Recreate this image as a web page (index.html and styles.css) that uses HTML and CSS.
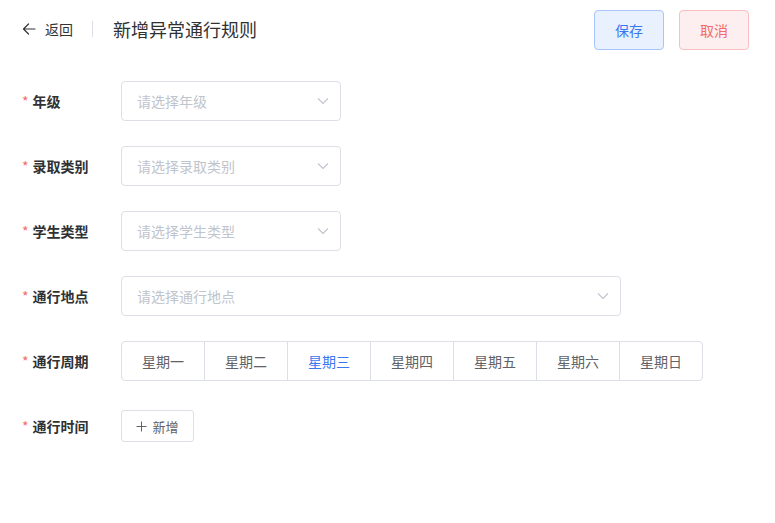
FILE: index.html
```html
<!DOCTYPE html>
<html lang="zh">
<head>
<meta charset="utf-8">
<link rel="stylesheet" href="styles.css">
</head>
<body>
<div class="page">
  <header class="header">
    <div class="header-left">
      <a class="back">
        <svg class="back-icon" width="14" height="14" viewBox="0 0 14 14"><path d="M13 7H1.5M6.5 2L1.5 7l5 5" fill="none" stroke="#333" stroke-width="1.2" stroke-linecap="round" stroke-linejoin="round"/></svg>
        <span>返回</span>
      </a>
      <span class="divider"></span>
      <h1 class="title">新增异常通行规则</h1>
    </div>
    <div class="header-actions">
      <button class="btn btn-save">保存</button>
      <button class="btn btn-cancel">取消</button>
    </div>
  </header>

  <form class="form">
    <div class="row">
      <label class="label"><span class="req">*</span>年级</label>
      <div class="select"><span class="ph">请选择年级</span><svg class="chev" width="12" height="8" viewBox="0 0 12 8"><path d="M1 1.5l5 5 5-5" fill="none" stroke="#c0c4cc" stroke-width="1.1"/></svg></div>
    </div>
    <div class="row">
      <label class="label"><span class="req">*</span>录取类别</label>
      <div class="select"><span class="ph">请选择录取类别</span><svg class="chev" width="12" height="8" viewBox="0 0 12 8"><path d="M1 1.5l5 5 5-5" fill="none" stroke="#c0c4cc" stroke-width="1.1"/></svg></div>
    </div>
    <div class="row">
      <label class="label"><span class="req">*</span>学生类型</label>
      <div class="select"><span class="ph">请选择学生类型</span><svg class="chev" width="12" height="8" viewBox="0 0 12 8"><path d="M1 1.5l5 5 5-5" fill="none" stroke="#c0c4cc" stroke-width="1.1"/></svg></div>
    </div>
    <div class="row">
      <label class="label"><span class="req">*</span>通行地点</label>
      <div class="select select-wide"><span class="ph">请选择通行地点</span><svg class="chev" width="12" height="8" viewBox="0 0 12 8"><path d="M1 1.5l5 5 5-5" fill="none" stroke="#c0c4cc" stroke-width="1.1"/></svg></div>
    </div>
    <div class="row">
      <label class="label"><span class="req">*</span>通行周期</label>
      <div class="week">
        <span class="day">星期一</span>
        <span class="day">星期二</span>
        <span class="day active">星期三</span>
        <span class="day">星期四</span>
        <span class="day">星期五</span>
        <span class="day">星期六</span>
        <span class="day">星期日</span>
      </div>
    </div>
    <div class="row">
      <label class="label"><span class="req">*</span>通行时间</label>
      <button type="button" class="btn-add"><svg class="plus" width="11" height="11" viewBox="0 0 11 11"><path d="M5.5 0.5v10M0.5 5.5h10" fill="none" stroke="#606266" stroke-width="1"/></svg>新增</button>
    </div>
  </form>
</div>
</body>
</html>
```

FILE: styles.css
```css
* { box-sizing: border-box; }
html, body { margin: 0; padding: 0; background: #fff; }
body {
  font-family: "Noto Sans CJK SC", "Noto Sans", sans-serif;
  color: #303133;
  width: 775px;
  height: 523px;
  overflow: hidden;
}
.page { padding: 10px 26px 0 22px; }
.header {
  display: flex;
  justify-content: space-between;
  align-items: center;
  height: 40px;
}
.header-left { display: flex; align-items: center; margin-top: -3px; }
.back {
  display: flex;
  align-items: center;
  gap: 9px;
  font-size: 14px;
  color: #333;
}
.back-icon { display: block; }
.divider {
  width: 1px;
  height: 16px;
  background: #dcdfe6;
  margin: 0 20px 0 19px;
}
.title {
  margin: 0;
  font-size: 18px;
  font-weight: 400;
  color: #303133;
}
.header-actions { display: flex; gap: 15px; }
.btn {
  width: 70px;
  height: 40px;
  border-radius: 4px;
  font-family: inherit;
  font-size: 14px;
  padding: 0;
}
.btn-save { background: #e9f0fe; border: 1px solid #a9c4f8; color: #3a78ef; }
.btn-cancel { background: #fdeeef; border: 1px solid #f8bec1; color: #f26b6b; }

.form {
  margin-top: 31px;
  display: flex;
  flex-direction: column;
  gap: 25px;
}
.row { display: flex; align-items: center; height: 40px; }
.label {
  width: 99px;
  font-size: 14px;
  font-weight: 700;
  color: #303133;
}
.req { color: #f56c6c; margin-right: 4px; font-weight: 400; }
.select {
  width: 220px;
  height: 40px;
  border: 1px solid #dcdfe6;
  border-radius: 4px;
  display: flex;
  align-items: center;
  justify-content: space-between;
  padding: 0 11px 0 15px;
}
.select-wide { width: 500px; }
.ph { font-size: 14px; color: #c0c4cc; }
.chev { display: block; }
.week {
  display: flex;
  border: 1px solid #dcdfe6;
  border-radius: 4px;
  height: 40px;
}
.day {
  width: 83px;
  display: flex;
  align-items: center;
  justify-content: center;
  font-size: 14px;
  color: #606266;
  border-left: 1px solid #dcdfe6;
}
.day:first-child { border-left: 0; width: 82px; }
.day.active { color: #3a78ef; }
.btn-add {
  width: 73px;
  height: 32px;
  border: 1px solid #dcdfe6;
  border-radius: 3px;
  background: #fff;
  font-family: inherit;
  font-size: 13px;
  color: #606266;
  display: flex;
  align-items: center;
  justify-content: center;
  gap: 5px;
  padding: 0;
}
.plus { display: block; }
```
